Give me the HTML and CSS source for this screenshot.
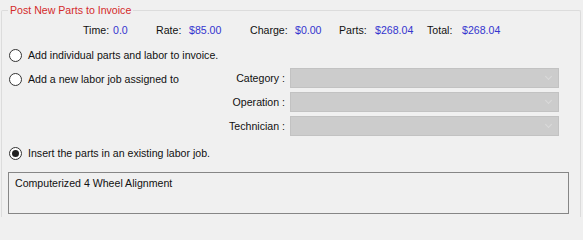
FILE: index.html
```html
<!DOCTYPE html>
<html>
<head>
<meta charset="utf-8">
<link rel="stylesheet" href="styles.css">
</head>
<body>
<div class="group">
  <div class="legend">Post New Parts to Invoice</div>
  <div class="stats">
    <div class="pair p-time"><span class="lbl">Time:</span><span class="val">0.0</span></div>
    <div class="pair p-rate"><span class="lbl">Rate:</span><span class="val">$85.00</span></div>
    <div class="pair p-charge"><span class="lbl">Charge:</span><span class="val">$0.00</span></div>
    <div class="pair p-parts"><span class="lbl">Parts:</span><span class="val">$268.04</span></div>
    <div class="pair p-total"><span class="lbl">Total:</span><span class="val">$268.04</span></div>
  </div>
  <label class="radio r1"><span class="dot"></span><span>Add individual parts and labor to invoice.</span></label>
  <div class="assign">
    <label class="radio r2"><span class="dot"></span><span>Add a new labor job assigned to</span></label>
    <div class="fields">
      <span class="flbl">Category :</span><div class="combo"><span class="chev"></span></div>
      <span class="flbl">Operation :</span><div class="combo"><span class="chev"></span></div>
      <span class="flbl">Technician :</span><div class="combo"><span class="chev"></span></div>
    </div>
  </div>
  <label class="radio r3"><span class="dot checked"></span><span>Insert the parts in an existing labor job.</span></label>
  <div class="listbox">Computerized 4 Wheel Alignment</div>
</div>
</body>
</html>
```
FILE: styles.css
```css
html, body {
  margin: 0;
  padding: 0;
  background: #f0f0f0;
  overflow: hidden;
  height: 217px;
  font-family: "Liberation Sans", Arial, sans-serif;
  font-size: 10.6px;
  color: #111;
}
.group {
  position: relative;
  margin: 10px 0 0 1px;
  width: 578px;
  height: 206px;
  border: 1px solid #dcdcdc;
  border-bottom: none;
  border-radius: 2px 2px 0 0;
}
.legend {
  position: absolute;
  top: -7px;
  left: 6px;
  padding: 0 2px;
  background: #f0f0f0;
  color: #d42a2a;
  line-height: 13px;
}
.stats {
  display: flex;
  margin-top: 12px;
  padding-left: 81px;
  height: 14px;
  line-height: 14px;
}
.pair { display: flex; }
.p-time { width: 73px; }
.p-rate { width: 94px; }
.p-charge { width: 89px; }
.p-parts { width: 88px; }
.p-time .lbl { width: 30px; }
.p-rate .lbl { width: 33px; }
.p-charge .lbl { width: 45px; }
.p-parts .lbl { width: 36px; }
.p-total .lbl { width: 35px; }
.val { color: #3535cf; }
.radio {
  display: flex;
  align-items: center;
  gap: 6px;
  height: 14px;
  line-height: 14px;
  padding-left: 7px;
}
.dot {
  width: 11px;
  height: 11px;
  border: 1px solid #333;
  border-radius: 50%;
  background: #fff;
  display: flex;
  align-items: center;
  justify-content: center;
}
.dot.checked::after {
  content: "";
  width: 7px;
  height: 7px;
  border-radius: 50%;
  background: #222;
}
.r1 { margin-top: 11px; }
.assign {
  display: flex;
  margin-top: 6px;
}
.r2 {
  width: 190px;
  margin-top: 4px;
}
.fields {
  display: grid;
  grid-template-columns: 86px 269px;
  column-gap: 5px;
  row-gap: 4px;
  align-items: center;
}
.flbl { text-align: right; }
.combo {
  position: relative;
  height: 18px;
  border: 1px solid #c2c2c2;
  background: #cccccc;
}
.chev {
  position: absolute;
  right: 7px;
  top: 5px;
  width: 4px;
  height: 4px;
  border-right: 1.5px solid #dadada;
  border-bottom: 1.5px solid #dadada;
  transform: rotate(45deg);
}
.r3 { margin-top: 10px; }
.listbox {
  margin: 12px 0 0 6px;
  width: 553px;
  height: 37px;
  border: 1px solid #868686;
  padding: 3px 0 0 6px;
  line-height: 14px;
}
```
